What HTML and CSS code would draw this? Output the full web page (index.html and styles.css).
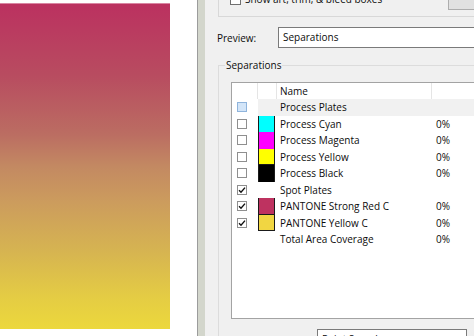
FILE: index.html
```html
<!DOCTYPE html>
<html>
<head>
<meta charset="utf-8">
<link rel="stylesheet" href="styles.css">
</head>
<body>
<div class="page">
  <div class="canvas">
    <div class="gradient"></div>
  </div>
  <div class="edge-line"></div>
  <div class="edge-strip"></div>
  <div class="dialog">
    <div class="topgroup">
      <div class="showboxes">
        <span class="cb"></span>
        <span class="cb-label">Show art, trim, &amp; bleed boxes</span>
      </div>
      <div class="btn"></div>
    </div>
    <div class="preview-row">
      <span class="preview-label">Preview:</span>
      <div class="dropdown">Separations</div>
    </div>
    <div class="sepgroup">
      <div class="group-label">Separations</div>
      <div class="listbox">
        <div class="lrow header">
          <div class="c1 hcell"></div>
          <div class="c2 hcell"></div>
          <div class="c3 hcell">Name</div>
          <div class="c4 hcell"></div>
        </div>
        <div class="lrow hl">
          <div class="c1"><span class="cb cb-hot"></span></div>
          <div class="c2"></div>
          <div class="c3">Process Plates</div>
          <div class="c4"></div>
        </div>
        <div class="lrow">
          <div class="c1"><span class="cb"></span></div>
          <div class="c2"><span class="sw sw-cyan"></span></div>
          <div class="c3">Process Cyan</div>
          <div class="c4">0%</div>
        </div>
        <div class="lrow">
          <div class="c1"><span class="cb"></span></div>
          <div class="c2"><span class="sw sw-magenta"></span></div>
          <div class="c3">Process Magenta</div>
          <div class="c4">0%</div>
        </div>
        <div class="lrow">
          <div class="c1"><span class="cb"></span></div>
          <div class="c2"><span class="sw sw-yellow"></span></div>
          <div class="c3">Process Yellow</div>
          <div class="c4">0%</div>
        </div>
        <div class="lrow">
          <div class="c1"><span class="cb"></span></div>
          <div class="c2"><span class="sw sw-black"></span></div>
          <div class="c3">Process Black</div>
          <div class="c4">0%</div>
        </div>
        <div class="lrow">
          <div class="c1"><span class="cb"><svg viewBox="0 0 8 8" class="tick"><path d="M1 4.2 L3 6.2 L7 1.6"/></svg></span></div>
          <div class="c2"></div>
          <div class="c3">Spot Plates</div>
          <div class="c4"></div>
        </div>
        <div class="lrow">
          <div class="c1"><span class="cb"><svg viewBox="0 0 8 8" class="tick"><path d="M1 4.2 L3 6.2 L7 1.6"/></svg></span></div>
          <div class="c2"><span class="sw sw-red"></span></div>
          <div class="c3">PANTONE Strong Red C</div>
          <div class="c4">0%</div>
        </div>
        <div class="lrow">
          <div class="c1"><span class="cb"><svg viewBox="0 0 8 8" class="tick"><path d="M1 4.2 L3 6.2 L7 1.6"/></svg></span></div>
          <div class="c2"><span class="sw sw-pyellow"></span></div>
          <div class="c3">PANTONE Yellow C</div>
          <div class="c4">0%</div>
        </div>
        <div class="lrow">
          <div class="c1"></div>
          <div class="c2"></div>
          <div class="c3">Total Area Coverage</div>
          <div class="c4">0%</div>
        </div>
      </div>
      <div class="sample-box">Point Sample</div>
    </div>
  </div>
</div>
</body>
</html>
```
FILE: styles.css
```css
html, body {
  margin: 0;
  padding: 0;
  background: #ffffff;
}
body {
  width: 474px;
  height: 336px;
  overflow: hidden;
  font-family: "Open Sans", "Noto Sans", sans-serif;
  font-size: 10px;
  color: #0c0c0c;
}
.page {
  display: flex;
  width: 474px;
  height: 336px;
  overflow: hidden;
}
.canvas {
  width: 197px;
  flex: none;
  background: #ffffff;
}
.gradient {
  margin-top: 3px;
  width: 170px;
  height: 326px;
  border-top: 1px solid #d985a2;
  box-sizing: border-box;
  background: linear-gradient(to bottom,
    #bb3160 0%,
    #b84c60 22%,
    #bb6d62 40%,
    #c38962 50%,
    #cc9c5d 61%,
    #d6b451 76%,
    #e5cd43 91%,
    #ecd83c 100%);
}
.edge-line {
  width: 1px;
  flex: none;
  background: #9c9c9c;
}
.edge-strip {
  width: 7px;
  flex: none;
  background: #d3d6cc;
}
.dialog {
  flex: 1;
  min-width: 0;
  background: #f0f0f0;
  overflow: hidden;
  display: flex;
  flex-direction: column;
}
.topgroup {
  margin-top: -10px;
  margin-left: 13px;
  margin-right: -20px;
  height: 27px;
  box-sizing: border-box;
  border-left: 1px solid #d8d8d8;
  border-bottom: 1px solid #d8d8d8;
  display: flex;
  align-items: flex-start;
  flex: none;
}
.showboxes {
  width: 218px;
  padding-left: 11px;
  margin-top: 4px;
  display: flex;
  align-items: center;
  gap: 4px;
  flex: none;
}
.cb {
  width: 11px;
  height: 11px;
  box-sizing: border-box;
  border: 1px solid #8f8f8f;
  background: #ffffff;
  display: inline-flex;
  align-items: center;
  justify-content: center;
  flex: none;
}
.showboxes .cb {
  border-color: #707070;
}
.cb-label {
  line-height: 11px;
  white-space: nowrap;
}
.btn {
  margin-top: 0;
  width: 60px;
  height: 20px;
  box-sizing: border-box;
  border: 1px solid #adadad;
  background: #e1e1e1;
  flex: none;
}
.preview-row {
  margin-top: 10px;
  margin-left: 12px;
  margin-right: -20px;
  height: 21px;
  display: flex;
  align-items: center;
  flex: none;
}
.preview-label {
  width: 61px;
  flex: none;
}
.dropdown {
  flex: 1;
  height: 21px;
  box-sizing: border-box;
  border: 1px solid #7a7a7a;
  background: #ffffff;
  padding-left: 4px;
  line-height: 19px;
}
.sepgroup {
  margin-top: 17px;
  margin-left: 13px;
  margin-right: -20px;
  border-top: 1px solid #dcdcdc;
  border-left: 1px solid #dcdcdc;
  flex: 1;
  display: flex;
  flex-direction: column;
  align-items: flex-start;
}
.group-label {
  margin-top: -8px;
  margin-left: 6px;
  padding: 0 1px;
  height: 15px;
  line-height: 15px;
  background: #f0f0f0;
}
.listbox {
  margin-top: 9px;
  margin-left: 12px;
  width: 280px;
  height: 237px;
  box-sizing: border-box;
  border: 1px solid #a3a3a3;
  border-right: none;
  background: #ffffff;
  flex: none;
}
.lrow {
  display: grid;
  grid-template-columns: 26px 19px 155px 1fr;
  height: 16.5px;
  align-items: center;
}
.lrow > div {
  height: 100%;
  display: flex;
  align-items: center;
  white-space: nowrap;
}
.header {
  height: 16px;
}
.hcell {
  box-sizing: border-box;
  border-right: 1px solid #e5e5e5;
}
.c3 {
  padding-left: 3px;
}
.c4 {
  padding-left: 4px;
}
.c1 .cb {
  width: 10px;
  height: 10px;
  margin-left: 5px;
}
.cb-hot {
  background: #d3e5f8;
  border-color: #8fb4dc !important;
}
.hl .c2, .hl .c3, .hl .c4 {
  background: #f1f1f1;
}
.sw {
  display: block;
  width: 17px;
  height: 100%;
  box-sizing: border-box;
  border-left: 1px solid #1a1a1a;
  border-right: 1px solid #1a1a1a;
}
.sw-cyan { background: #00ffff; }
.sw-magenta { background: #ff00ff; }
.sw-yellow { background: #ffff00; border-bottom: 1px solid #1a1a1a; }
.sw-black { background: #000000; }
.sw-red { background: #be3260; border-bottom: 1px solid #1a1a1a; }
.sw-pyellow { background: #f1d642; border-bottom: 1px solid #1a1a1a; }
.tick {
  width: 8px;
  height: 8px;
  fill: none;
  stroke: #111;
  stroke-width: 1.4;
}
.sample-box {
  margin-top: 10px;
  margin-left: 98px;
  width: 150px;
  height: 20px;
  box-sizing: border-box;
  border: 1px solid #7a7a7a;
  background: #ffffff;
  padding-left: 4px;
  padding-top: 2px;
  flex: none;
}
```
